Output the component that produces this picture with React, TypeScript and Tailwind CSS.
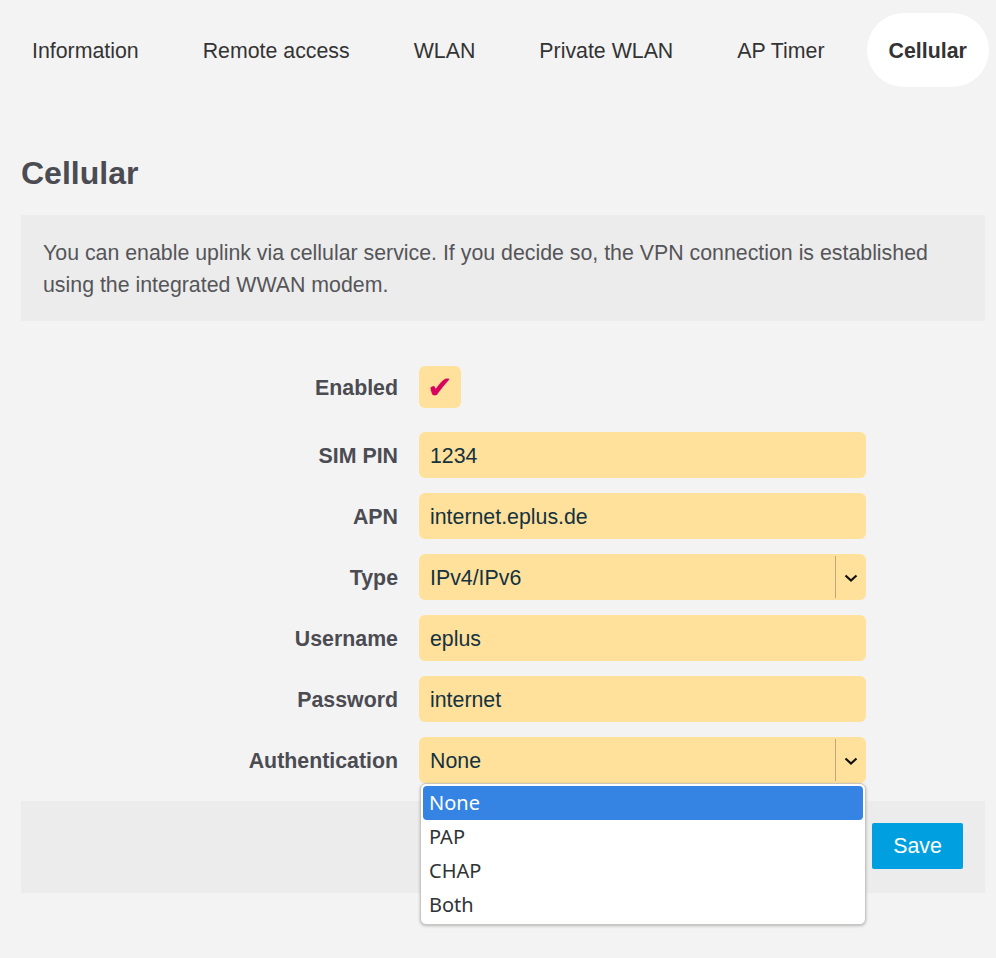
import { useState } from 'react'

const tabs = ['Information', 'Remote access', 'WLAN', 'Private WLAN', 'AP Timer', 'Cellular']

function Chevron() {
  return (
    <svg width="14" height="10" viewBox="0 0 14 10" fill="none">
      <path d="M1.5 2.5 L7 7.5 L12.5 2.5" stroke="#111" strokeWidth="2.2" />
    </svg>
  )
}

function Row({
  label,
  className = '',
  children,
}: {
  label: string
  className?: string
  children: React.ReactNode
}) {
  return (
    <div className={`flex items-center ${className}`}>
      <label className="w-[398px] pr-[21px] pt-[4px] text-right text-[21.33px] font-bold text-[#4b4b52]">
        {label}
      </label>
      {children}
    </div>
  )
}

function TextInput({ value }: { value: string }) {
  return (
    <div className="flex h-[46px] w-[447px] items-center rounded-[6px] bg-[#ffe19b] px-[11px] pt-[4px] text-[21.33px] text-[#14323f]">
      {value}
    </div>
  )
}

function Select({ value }: { value: string }) {
  return (
    <div className="flex h-[46px] w-[447px] items-center rounded-[6px] bg-[#ffe19b] text-[21.33px] text-[#14323f]">
      <span className="flex-1 px-[11px] pt-[4px]">{value}</span>
      <div className="h-[42px] w-px bg-[#bfa978]" />
      <div className="flex w-[30px] items-center justify-center pt-[2px]">
        <Chevron />
      </div>
    </div>
  )
}

export default function App() {
  const [active] = useState('Cellular')
  const options = ['None', 'PAP', 'CHAP', 'Both']

  return (
    <div className="min-h-[958px] bg-[#f3f3f3] font-['Liberation_Sans',Arial,sans-serif]">
      <nav className="flex gap-5 pl-[10px] pt-[13px]">
        {tabs.map((t) => (
          <div
            key={t}
            className={
              t === active
                ? 'rounded-full bg-white px-[22px] pt-[26px] pb-[24px] text-[21.33px] leading-[24px] font-bold text-[#333]'
                : 'px-[22px] pt-[26px] pb-[24px] text-[21.33px] leading-[24px] text-[#333]'
            }
          >
            {t}
          </div>
        ))}
      </nav>

      <div className="pl-[21px] pr-[11px]">
        <h1 className="mt-[68px] text-[32px] leading-[36px] font-bold text-[#4b4b52]">Cellular</h1>

        <div className="mt-[24px] bg-[#ececec] px-[22px] pt-[22px] pb-[20px] text-[21.33px] leading-[32px] text-[#555559]">
          You can enable uplink via cellular service. If you decide so, the VPN connection is
          established using the integrated WWAN modem.
        </div>

        <div className="mt-[45px] flex flex-col gap-[15px]">
          <Row label="Enabled" className="pb-[9px]">
            <div className="flex h-[42px] w-[42px] items-center justify-center rounded-[6px] bg-[#ffe19b] font-['DejaVu_Sans',sans-serif] text-[31px] leading-none text-[#d9005e]">
              ✔
            </div>
          </Row>
          <Row label="SIM PIN">
            <TextInput value="1234" />
          </Row>
          <Row label="APN">
            <TextInput value="internet.eplus.de" />
          </Row>
          <Row label="Type">
            <Select value="IPv4/IPv6" />
          </Row>
          <Row label="Username">
            <TextInput value="eplus" />
          </Row>
          <Row label="Password">
            <TextInput value="internet" />
          </Row>
          <Row label="Authentication">
            <div className="relative">
              <Select value="None" />
              <ul className="absolute left-px top-[46px] z-10 w-[446px] rounded-[6px] border border-[#c9c6c2] bg-white p-[2px] font-['Noto_Sans',sans-serif] text-[20px] text-[#2e3436] shadow-[0_1px_3px_rgba(0,0,0,0.25)]">
                {options.map((o, i) => (
                  <li
                    key={o}
                    className={
                      i === 0
                        ? 'flex h-[34px] items-center rounded-[4px] bg-[#3584e4] px-[6px] text-white'
                        : 'flex h-[34px] items-center px-[6px]'
                    }
                  >
                    {o}
                  </li>
                ))}
              </ul>
            </div>
          </Row>
        </div>

        <div className="mt-[18px] flex justify-end bg-[#ececec] px-[22px] pt-[22px] pb-[24px]">
          <button className="h-[46px] w-[91px] rounded-[2px] bg-[#00a0e0] pt-[2px] text-[21.33px] text-white">
            Save
          </button>
        </div>
      </div>
    </div>
  )
}
